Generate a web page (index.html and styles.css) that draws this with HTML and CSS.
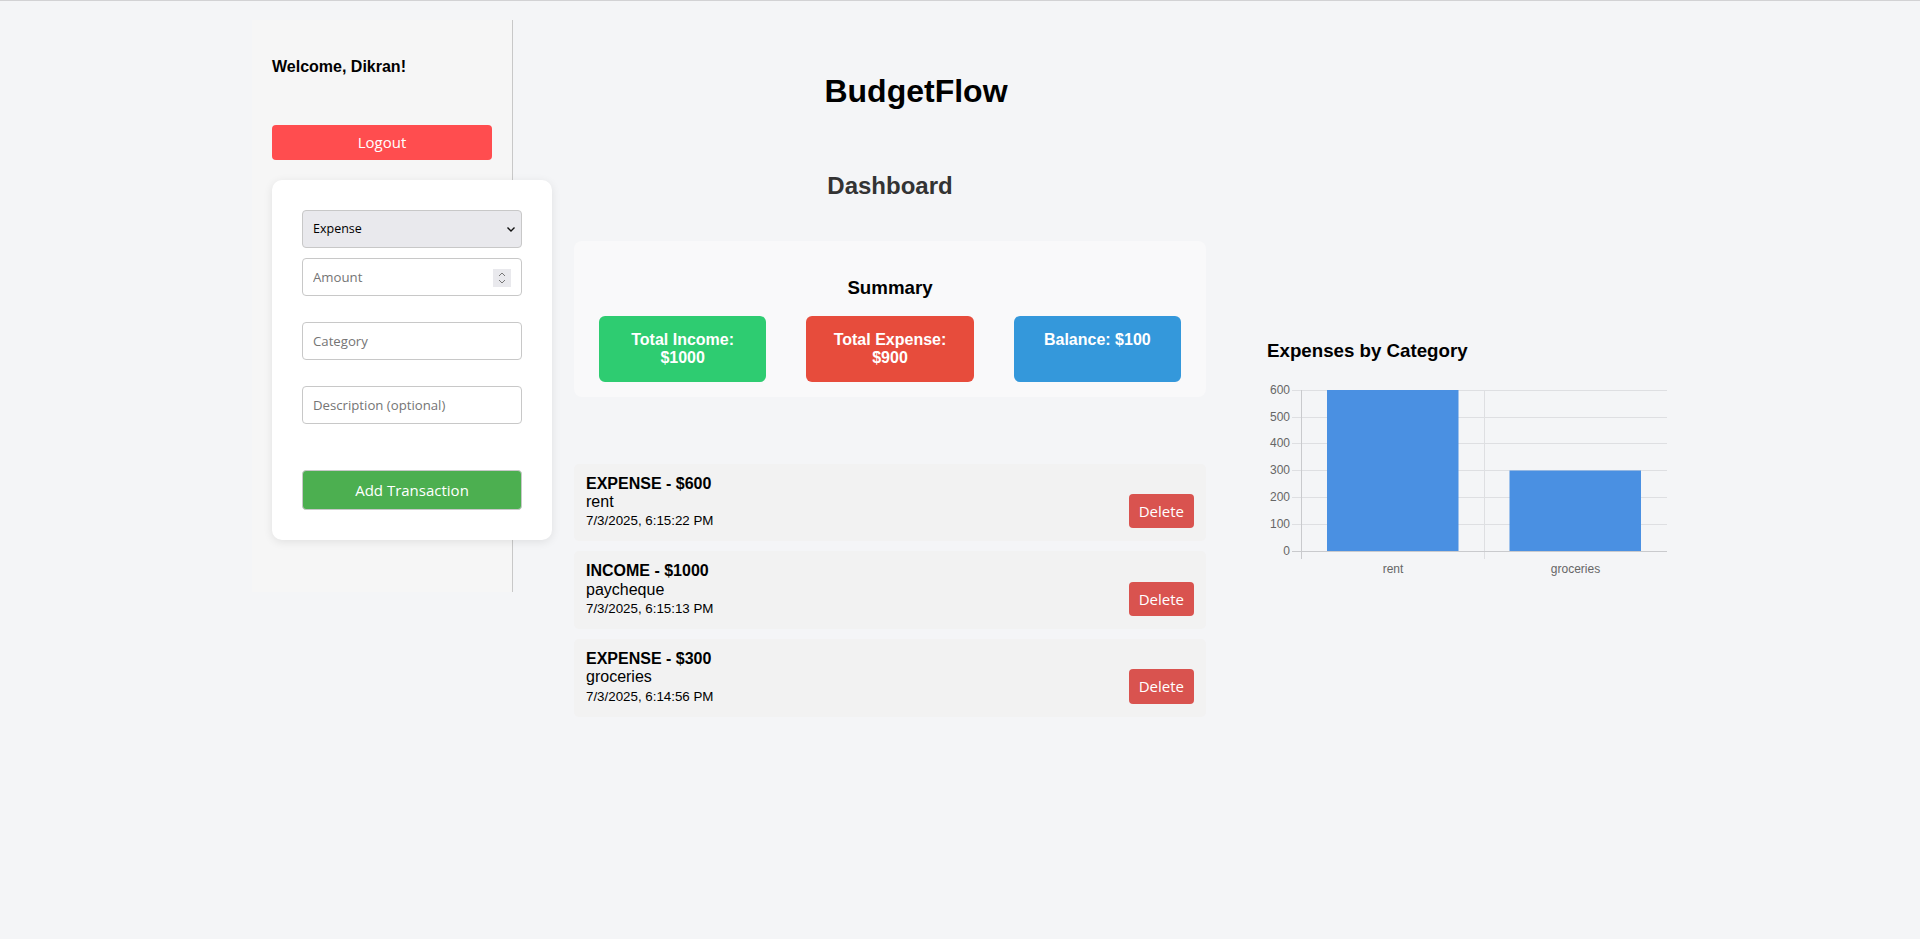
FILE: index.html
```html
<!DOCTYPE html>
<html lang="en">
<head>
<meta charset="utf-8">
<title>BudgetFlow</title>
<link rel="stylesheet" href="styles.css">
</head>
<body>
<div class="page">
  <aside class="sidebar">
    <p class="welcome">Welcome, Dikran!</p>
    <button class="btn logout" type="button">Logout</button>
    <form class="tx-form">
      <div class="select-wrap">
        <select class="field select">
          <option>Expense</option>
          <option>Income</option>
        </select>
        <svg class="chev" width="10" height="8" viewBox="0 0 10 8"><path d="M1.5 2.5 L5 6 L8.5 2.5" fill="none" stroke="#111" stroke-width="1.4"/></svg>
      </div>
      <div class="num-wrap">
        <input class="field amount" type="text" placeholder="Amount">
        <span class="spin"><svg width="18" height="18" viewBox="0 0 18 18"><path d="M6 7 L9 4 L12 7" fill="none" stroke="#777" stroke-width="1"/><path d="M6 11 L9 14 L12 11" fill="none" stroke="#777" stroke-width="1"/></svg></span>
      </div>
      <input class="field category" type="text" placeholder="Category">
      <input class="field desc" type="text" placeholder="Description (optional)">
      <button class="btn add" type="button">Add Transaction</button>
    </form>
  </aside>

  <main class="main">
    <h1 class="brand">BudgetFlow</h1>
    <h2 class="title">Dashboard</h2>
    <section class="summary">
      <h3 class="summary-title">Summary</h3>
      <div class="boxes">
        <div class="box income">Total Income: $1000</div>
        <div class="box expense">Total Expense: $900</div>
        <div class="box balance">Balance: $100</div>
      </div>
    </section>
    <ul class="tx-list">
      <li class="tx">
        <div class="tx-info"><strong>EXPENSE - $600</strong><br>rent<br><small>7/3/2025, 6:15:22 PM</small></div>
        <button class="btn del" type="button">Delete</button>
      </li>
      <li class="tx">
        <div class="tx-info"><strong>INCOME - $1000</strong><br>paycheque<br><small>7/3/2025, 6:15:13 PM</small></div>
        <button class="btn del" type="button">Delete</button>
      </li>
      <li class="tx">
        <div class="tx-info"><strong>EXPENSE - $300</strong><br>groceries<br><small>7/3/2025, 6:14:56 PM</small></div>
        <button class="btn del" type="button">Delete</button>
      </li>
    </ul>
  </main>

  <section class="chart-col">
    <h3 class="chart-title">Expenses by Category</h3>
    <svg class="chart" width="401" height="210" viewBox="0 0 401 210">
      <g stroke="#dedfe2" stroke-width="1" shape-rendering="crispEdges">
        <line x1="25" y1="20.5" x2="400" y2="20.5"/>
        <line x1="25" y1="47.5" x2="400" y2="47.5"/>
        <line x1="25" y1="73.5" x2="400" y2="73.5"/>
        <line x1="25" y1="100.5" x2="400" y2="100.5"/>
        <line x1="25" y1="127.5" x2="400" y2="127.5"/>
        <line x1="25" y1="154.5" x2="400" y2="154.5"/>
        <line x1="217.5" y1="20" x2="217.5" y2="189"/>
      </g>
      <g stroke="#c9cacd" stroke-width="1" shape-rendering="crispEdges">
        <line x1="25" y1="181.5" x2="400" y2="181.5"/>
        <line x1="34.5" y1="20" x2="34.5" y2="189"/>
      </g>
      <rect x="60" y="20" width="131.5" height="161" fill="#4a90e2"/>
      <rect x="242.5" y="100.5" width="131.5" height="80.5" fill="#4a90e2"/>
      <g class="ylab" text-anchor="end">
        <text x="23" y="24.3">600</text>
        <text x="23" y="51.3">500</text>
        <text x="23" y="77.3">400</text>
        <text x="23" y="104.3">300</text>
        <text x="23" y="131.3">200</text>
        <text x="23" y="158.3">100</text>
        <text x="23" y="185.3">0</text>
      </g>
      <g class="xlab" text-anchor="middle">
        <text x="126" y="202.5">rent</text>
        <text x="308.5" y="202.5">groceries</text>
      </g>
    </svg>
  </section>
</div>
</body>
</html>
```

FILE: styles.css
```css
* {
  box-sizing: border-box;
}

html,
body {
  margin: 0;
  padding: 0;
}

body {
  background: #f4f5f7;
  font-family: "Liberation Sans", Arial, Helvetica, sans-serif;
  font-size: 16px;
  color: #000;
}

.page {
  border-top: 1px solid #d2d2d4;
  display: flex;
  justify-content: center;
  align-items: flex-start;
  gap: 61px;
  padding-top: 19px;
  min-height: 939px;
}

/* ---------- Sidebar ---------- */
.sidebar {
  flex: none;
  width: 261px;
  padding: 20px 20px 52px;
  background: #f6f6f6;
  border-right: 1px solid #c8c8c8;
}

.welcome {
  margin: 17.5px 0 0;
  font-weight: bold;
  line-height: normal;
}

.btn {
  font-family: "Open Sans", "Noto Sans", sans-serif;
  font-size: 15px;
  color: #fff;
  cursor: pointer;
}

.logout {
  display: block;
  width: 100%;
  height: 35px;
  margin-top: 49px;
  padding: 0;
  border: none;
  border-radius: 4px;
  background: #ff4d4f;
}

.tx-form {
  width: 280px;
  margin-top: 20px;
  padding: 30.5px 30px 30.4px;
  background: #fff;
  border-radius: 10px;
  box-shadow: 0 2px 10px rgba(0, 0, 0, 0.09);
}

.field {
  display: block;
  width: 100%;
  height: 38.5px;
  padding: 0 10px;
  border: 1px solid #c8c8c8;
  border-radius: 4px;
  background: #fff;
  font-family: "Open Sans", "Noto Sans", sans-serif;
  font-size: 13.2px;
  color: #000;
  outline: none;
}

.field::placeholder {
  color: #757575;
}

.select-wrap,
.num-wrap {
  position: relative;
}

.select {
  height: 37.5px;
  -webkit-appearance: none;
  appearance: none;
  background: #e9e9ed;
  font-size: 12.5px;
}

.chev {
  position: absolute;
  right: 6px;
  top: 15px;
}

.num-wrap {
  margin-top: 10px;
}

.spin {
  position: absolute;
  top: 11px;
  right: 11px;
  width: 18px;
  height: 18px;
  background: #e9e9ed;
  display: flex;
}

.category {
  margin-top: 25.8px;
}

.desc {
  margin-top: 25.5px;
}

.add {
  display: block;
  width: 100%;
  height: 40px;
  margin-top: 45.5px;
  padding: 0;
  border: 1px solid #c8c8c8;
  border-radius: 4px;
  background: #4caf50;
}

/* ---------- Main ---------- */
.main {
  flex: none;
  width: 632px;
}

.brand {
  margin: 52.5px 0 62.7px;
  padding-left: 52px;
  font-size: 32px;
  font-weight: bold;
  text-align: center;
  line-height: normal;
}

.title {
  margin: 0 0 40.4px;
  font-size: 24px;
  font-weight: bold;
  color: #333;
  text-align: center;
  line-height: normal;
}

.summary {
  padding: 15px 25px;
  background: #f9f9fa;
  border-radius: 8px;
}

.summary-title {
  margin: 21px 0 17.5px;
  font-size: 18.72px;
  text-align: center;
  line-height: normal;
}

.boxes {
  display: flex;
  gap: 40px;
}

.box {
  flex: 1;
  padding: 15px;
  border-radius: 6px;
  color: #fff;
  font-weight: bold;
  text-align: center;
  line-height: normal;
}

.income {
  background: #2ecc71;
}

.expense {
  background: #e74c3c;
}

.balance {
  background: #3498db;
}

.tx-list {
  list-style: none;
  margin: 66.5px 0 0;
  padding: 0;
}

.tx {
  display: flex;
  justify-content: space-between;
  align-items: flex-end;
  padding: 11px 12px;
  margin-bottom: 10.2px;
  background: #f2f2f2;
  border-radius: 5px;
}

.tx-info {
  line-height: 18.2px;
}

.del {
  margin-bottom: 2px;
  padding: 7px 10px;
  border: none;
  border-radius: 4px;
  background: #d9534f;
  line-height: 20.4px;
}

/* ---------- Chart ---------- */
.chart-col {
  flex: none;
  width: 401px;
}

.chart-title {
  margin: 319.8px 0 8.7px;
  font-size: 18.72px;
  line-height: normal;
}

.chart {
  display: block;
}

.ylab text,
.xlab text {
  font-family: "Liberation Sans", Arial, sans-serif;
  font-size: 12px;
  fill: #666;
}
```
